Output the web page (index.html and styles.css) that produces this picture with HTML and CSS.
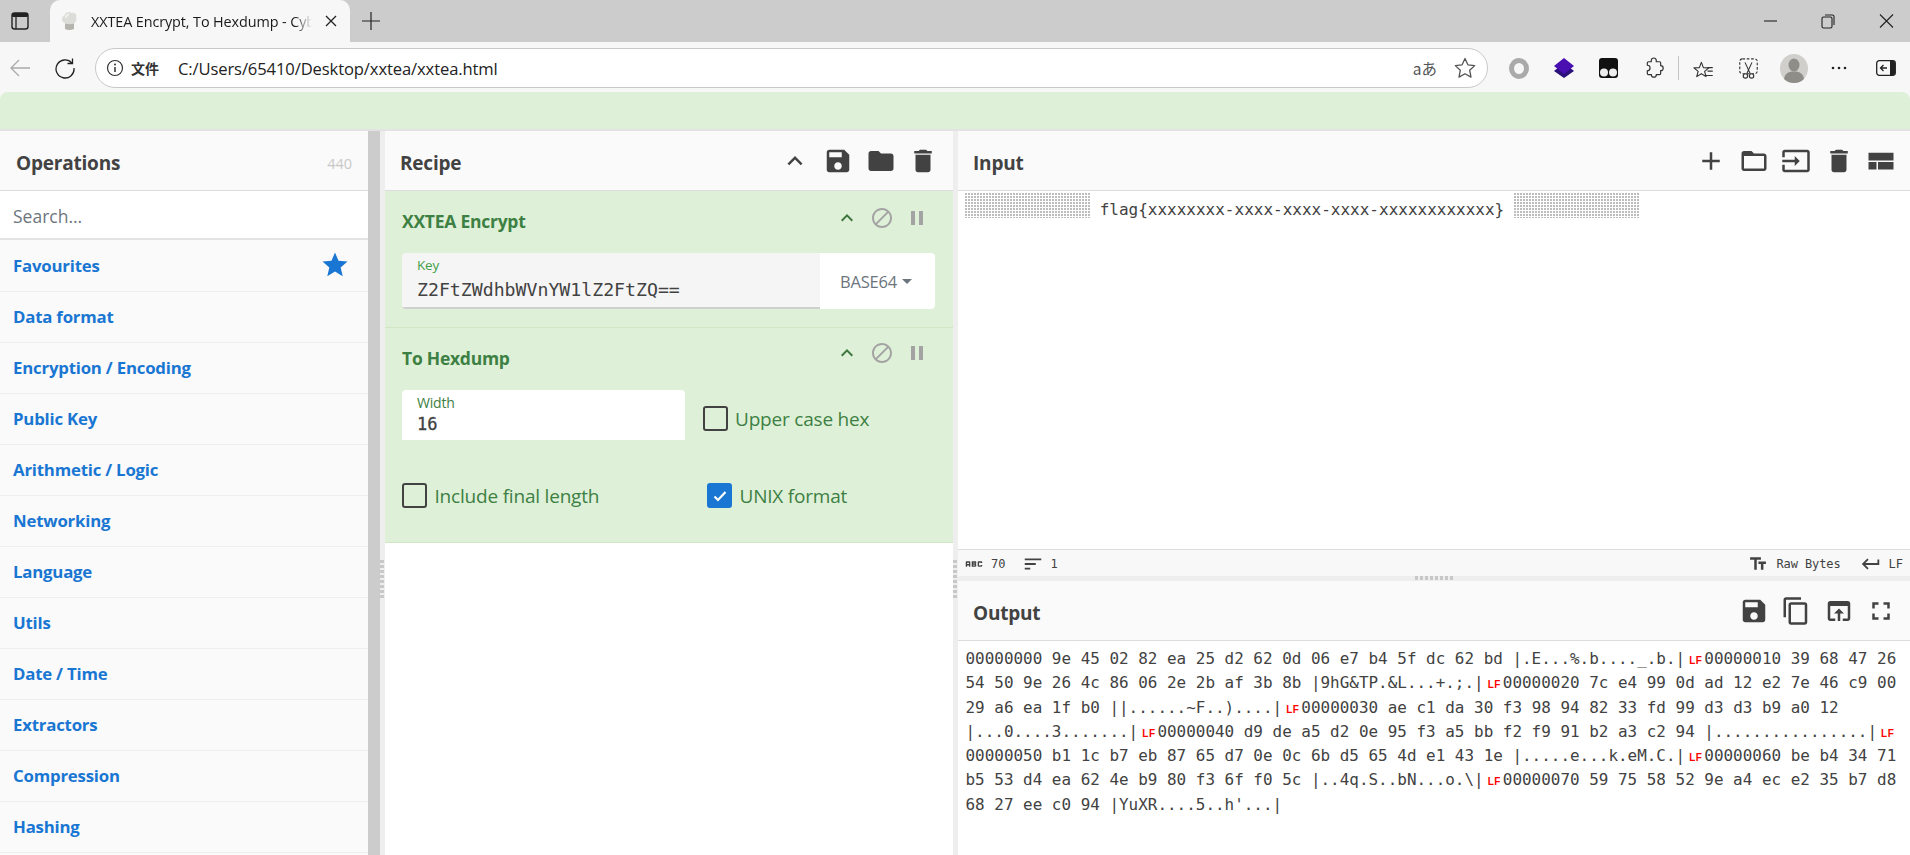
FILE: index.html
```html
<!DOCTYPE html>
<html lang="en">
<head>
<meta charset="utf-8">
<title>XXTEA Encrypt, To Hexdump - CyberChef</title>
<link rel="stylesheet" href="styles.css">
</head>
<body>
<svg class="defs" aria-hidden="true">
  <symbol id="i-save" viewBox="0 0 24 24"><path d="M17 3H5c-1.11 0-2 .9-2 2v14c0 1.1.89 2 2 2h14c1.1 0 2-.9 2-2V7l-4-4zm-5 16c-1.66 0-3-1.34-3-3s1.34-3 3-3 3 1.34 3 3-1.34 3-3 3zm3-10H5V5h10v4z"/></symbol>
  <symbol id="i-folder" viewBox="0 0 24 24"><path d="M10 4H4c-1.1 0-1.99.9-1.99 2L2 18c0 1.1.9 2 2 2h16c1.1 0 2-.9 2-2V8c0-1.1-.9-2-2-2h-8l-2-2z"/></symbol>
  <symbol id="i-folder-open" viewBox="0 0 24 24"><path d="M20 6h-8l-2-2H4c-1.1 0-1.99.9-1.99 2L2 18c0 1.1.9 2 2 2h16c1.1 0 2-.9 2-2V8c0-1.1-.9-2-2-2zm0 12H4V8h16v10z"/></symbol>
  <symbol id="i-delete" viewBox="0 0 24 24"><path d="M6 19c0 1.1.9 2 2 2h8c1.1 0 2-.9 2-2V7H6v12zM19 4h-3.5l-1-1h-5l-1 1H5v2h14V4z"/></symbol>
  <symbol id="i-less" viewBox="0 0 24 24"><path d="M12 8l-6 6 1.41 1.41L12 10.83l4.59 4.58L18 14z"/></symbol>
  <symbol id="i-add" viewBox="0 0 24 24"><path d="M19 13h-6v6h-2v-6H5v-2h6V5h2v6h6v2z"/></symbol>
  <symbol id="i-input" viewBox="0 0 24 24"><path d="M21 3.01H3c-1.1 0-2 .9-2 2V9h2V4.99h18v14.03H3V15H1v4.01c0 1.1.9 1.98 2 1.98h18c1.1 0 2-.88 2-1.98v-14c0-1.11-.9-2-2-2zM11 16l4-4-4-4v3H1v2h10v3z"/></symbol>
  <symbol id="i-layout" viewBox="0 0 24 24"><path d="M2 5.3h20v6.2H2zM2 12.7h6.4v6.1H2zM9.6 12.7H22v6.1H9.6z"/></symbol>
  <symbol id="i-copy" viewBox="0 0 24 24"><path d="M16 1H4c-1.1 0-2 .9-2 2v14h2V3h12V1zm3 4H8c-1.1 0-2 .9-2 2v14c0 1.1.9 2 2 2h11c1.1 0 2-.9 2-2V7c0-1.1-.9-2-2-2zm0 16H8V7h11v14z"/></symbol>
  <symbol id="i-open" viewBox="0 0 24 24"><path d="M19 4H5c-1.11 0-2 .9-2 2v12c0 1.1.89 2 2 2h4v-2H5V8h14v10h-4v2h4c1.1 0 2-.9 2-2V6c0-1.1-.89-2-2-2zm-7 6l-4 4h3v6h2v-6h3l-4-4z"/></symbol>
  <symbol id="i-full" viewBox="0 0 24 24"><path d="M7 14H5v5h5v-2H7v-3zm-2-4h2V7h3V5H5v5zm12 7h-3v2h5v-5h-2v3zM14 5v2h3v3h2V5h-5z"/></symbol>
  <symbol id="i-block" viewBox="0 0 24 24"><path d="M12 2C6.48 2 2 6.48 2 12s4.48 10 10 10 10-4.48 10-10S17.52 2 12 2zM4 12c0-4.42 3.58-8 8-8 1.85 0 3.55.63 4.9 1.69L5.69 16.9C4.63 15.55 4 13.85 4 12zm8 8c-1.85 0-3.55-.63-4.9-1.69L18.31 7.1C19.37 8.45 20 10.15 20 12c0 4.42-3.58 8-8 8z"/></symbol>
  <symbol id="i-pause" viewBox="0 0 24 24"><path d="M6 19h4V5H6v14zm8-14v14h4V5h-4z"/></symbol>
  <symbol id="i-tt" viewBox="0 0 24 24"><path d="M2.5 4v3h5v12h3V7h5V4h-13zm19 5h-9v3h3v7h3v-7h3V9z"/></symbol>
  <symbol id="i-return" viewBox="0 0 24 24"><path d="M19 7v4H5.83l3.58-3.59L8 6l-6 6 6 6 1.41-1.41L5.83 13H21V7z"/></symbol>
  <symbol id="i-sort" viewBox="0 0 24 24"><path d="M3 18h6v-2H3v2zM3 6v2h18V6H3zm0 7h12v-2H3v2z"/></symbol>
  <symbol id="i-abc" viewBox="0 0 24 24"><path d="M21 11h-1.5v-.5h-2v3h2V13H21v1c0 .55-.45 1-1 1h-3c-.55 0-1-.45-1-1v-4c0-.55.45-1 1-1h3c.55 0 1 .45 1 1v1zM8 10v5H6.5v-1.5h-2V15H3v-5c0-.55.45-1 1-1h3c.55 0 1 .45 1 1zm-1.5.5h-2V12h2v-1.5zm7 1.5c.55 0 1 .45 1 1v1c0 .55-.45 1-1 1h-4V9h4c.55 0 1 .45 1 1v1c0 .55-.45 1-1 1zM11 10.5v.75h2v-.75h-2zm2 2.25h-2v.75h2v-.75z"/></symbol>
  <symbol id="i-star" viewBox="0 0 24 24"><path d="M12 17.27L18.18 21l-1.64-7.03L22 9.24l-7.19-.61L12 2 9.19 8.63 2 9.24l5.46 4.73L5.82 21z"/></symbol>
</svg>

<header class="tabstrip">
  <div class="strip-btn">
    <svg class="chrome-ico" width="20" height="20" viewBox="0 0 20 20"><rect x="2" y="2" width="16" height="16" rx="2.5" fill="none" stroke="#222" stroke-width="1.4"/><rect x="2" y="2" width="16" height="4" rx="1.5" fill="#222"/><path d="M6 6v12" stroke="#222" stroke-width="1.3"/></svg>
  </div>
  <div class="tab">
    <svg class="favicon" width="20" height="20" viewBox="0 0 20 20"><path d="M5 12C1.500 11 .5 6 4.500 4.500c.5-3 5-4.500 7-2.500 3-1 6 1.500 4.500 4.500 1.500 2-.5 5-2 5.500v5.500c-2 1-6.500 1-9 0z" fill="#dcdcd8"/><path d="M5 12.500c3 1 6.500 1 9 0v5.500c-2.500 1.200-6.500 1.200-9 0z" fill="#b4b3ad"/><path d="M9 3c-2 .5-3 2-3 4" fill="none" stroke="#f4f4f2" stroke-width="1.500"/></svg>
    <span class="tab-title">XXTEA Encrypt, To Hexdump - CyberChef</span>
    <svg class="tab-close" width="12" height="12" viewBox="0 0 12 12"><path d="M1 1l10 10M11 1L1 11" stroke="#222" stroke-width="1.3"/></svg>
  </div>
  <div class="newtab">
    <svg width="18" height="18" viewBox="0 0 18 18"><path d="M9 0v18M0 9h18" stroke="#222" stroke-width="1.2"/></svg>
  </div>
  <div class="win-ctrls">
    <svg width="16" height="16" viewBox="0 0 16 16"><path d="M2 8h13" stroke="#222" stroke-width="1.1"/></svg>
    <svg width="16" height="16" viewBox="0 0 16 16"><rect x="2" y="4" width="10" height="11" rx="1.500" fill="none" stroke="#222" stroke-width="1.1"/><path d="M5 2h7.500A1.500 1.500 0 0 1 14 3.500V12" fill="none" stroke="#222" stroke-width="1.1"/></svg>
    <svg width="16" height="16" viewBox="0 0 16 16"><path d="M2 1.500l13 13M15 1.500l-13 13" stroke="#222" stroke-width="1.1"/></svg>
  </div>
</header>

<nav class="toolbar">
  <div class="tool-left">
    <svg width="22" height="22" viewBox="0 0 22 22"><path d="M21 11H2M10 3l-8 8 8 8" fill="none" stroke="#aaa" stroke-width="1.300"/></svg>
  </div>
  <div class="tool-left">
    <svg width="22" height="22" viewBox="0 0 22 22"><path d="M17.800 6A9 9 0 1 0 20 11" fill="none" stroke="#222" stroke-width="1.300"/><path d="M18.500 1.500V6.500H13.500" fill="none" stroke="#222" stroke-width="1.300"/></svg>
  </div>
  <div class="omnibox">
    <svg class="info" width="18" height="18" viewBox="0 0 18 18"><circle cx="9" cy="9" r="7.500" fill="none" stroke="#333" stroke-width="1.200"/><path d="M9 8v5" stroke="#333" stroke-width="1.500"/><circle cx="9" cy="5.500" r="1" fill="#333"/></svg>
    <span class="scheme">文件</span>
    <span class="url">C:/Users/65410/Desktop/xxtea/xxtea.html</span>
    <span class="translate">aあ</span>
    <svg class="fav" width="24" height="24" viewBox="0 0 24 24"><path d="M12 2.500l2.900 6.300 6.800.8-5 4.700 1.300 6.800-6-3.400-6 3.400 1.300-6.800-5-4.700 6.800-.8z" fill="none" stroke="#555" stroke-width="1.300" stroke-linejoin="round"/></svg>
  </div>
  <div class="ext-row">
    <div class="ext"><svg width="20" height="21" viewBox="0 0 20 21"><ellipse cx="10" cy="10.500" rx="7.500" ry="8" fill="none" stroke="#aaa" stroke-width="5"/></svg></div>
    <div class="ext"><svg width="20" height="20" viewBox="0 0 20 20"><path d="M10 5l10 8-10 7-10-7z" fill="#2b0f7a"/><path d="M10 0l10 8-10 8L0 8z" fill="#4a0fb0"/></svg></div>
    <div class="ext"><svg width="19" height="20" viewBox="0 0 19 20"><rect width="19" height="20" rx="3" fill="#111"/><circle cx="5" cy="14.500" r="4" fill="#eee"/><circle cx="14" cy="14.500" r="4" fill="#eee"/></svg></div>
    <div class="ext"><svg width="20" height="22" viewBox="0 0 24 28"><path d="M8.500 4.500a3.200 3.200 0 0 1 6.400 0V6H19a1.500 1.500 0 0 1 1.500 1.500V11a3.200 3.200 0 0 1 0 6.400V21a1.500 1.500 0 0 1-1.500 1.500H15a3.200 3.200 0 0 1-6.400 0H5A1.500 1.500 0 0 1 3.500 21v-3.500a3.500 3.500 0 0 0 0-7V7.500A1.500 1.500 0 0 1 5 6h3.500z" fill="none" stroke="#333" stroke-width="1.500"/></svg></div>
    <div class="ext-sep"></div>
    <div class="ext"><svg width="22" height="21" viewBox="0 0 24 24"><path d="M9 2l2.300 6 6.200.3-4.800 4 1.600 6-5.300-3.400-5.300 3.400 1.600-6-4.800-4 6.200-.3z" fill="none" stroke="#333" stroke-width="1.300" stroke-linejoin="round" transform="translate(0 3)"/><path d="M16 11h6M16 15h6M12 20h10" stroke="#333" stroke-width="1.300"/></svg></div>
    <div class="ext"><svg width="21" height="21" viewBox="0 0 24 24"><rect x="2" y="1" width="20" height="17" rx="3" fill="none" stroke="#333" stroke-width="1.300" stroke-dasharray="3 2"/><path d="M8 5l6 13M16 5l-6 13" stroke="#333" stroke-width="1.200"/><circle cx="8.500" cy="20.500" r="2.500" fill="#f7f7f7" stroke="#333" stroke-width="1.300"/><circle cx="15.500" cy="20.500" r="2.500" fill="#f7f7f7" stroke="#333" stroke-width="1.300"/></svg></div>
    <div class="ext"><svg width="28" height="29" viewBox="0 0 28 29"><ellipse cx="14" cy="14.500" rx="14" ry="14.500" fill="#d0cfcb"/><ellipse cx="14" cy="11" rx="5.500" ry="6.500" fill="#8f8d88"/><path d="M4 25c1-6 5-7.500 10-7.500s9 1.500 10 7.500c-2.500 2.500-6 4-10 4s-7.500-1.500-10-4z" fill="#8f8d88"/></svg></div>
    <div class="ext"><svg width="18" height="4" viewBox="0 0 18 4"><circle cx="3" cy="2" r="1.300" fill="#222"/><circle cx="9" cy="2" r="1.300" fill="#222"/><circle cx="15" cy="2" r="1.300" fill="#222"/></svg></div>
    <div class="ext ext-last"><svg width="20" height="16" viewBox="0 0 20 16"><rect x=".7" y=".7" width="18.600" height="14.600" rx="2.500" fill="none" stroke="#222" stroke-width="1.300"/><path d="M14 1h3a2 2 0 0 1 2 2v10a2 2 0 0 1-2 2h-3z" fill="#222"/><path d="M11 8H5M7.500 5L4.500 8l3 3" fill="none" stroke="#222" stroke-width="1.300"/></svg></div>
  </div>
</nav>

<div class="banner"></div>

<main class="workspace">
  <section class="ops">
    <div class="title-row"><h2 class="title">Operations</h2><span class="count">440</span></div>
    <div class="search">Search...</div>
    <ul class="cats">
      <li class="cat cat-first">Favourites<svg class="cat-star"><use href="#i-star"/></svg></li>
      <li class="cat">Data format</li>
      <li class="cat">Encryption / Encoding</li>
      <li class="cat">Public Key</li>
      <li class="cat">Arithmetic / Logic</li>
      <li class="cat">Networking</li>
      <li class="cat">Language</li>
      <li class="cat">Utils</li>
      <li class="cat">Date / Time</li>
      <li class="cat">Extractors</li>
      <li class="cat">Compression</li>
      <li class="cat">Hashing</li>
    </ul>
  </section>
  <div class="scrollbar"></div>
  <div class="gutter-v"><span class="grip-v"></span></div>

  <section class="recipe">
    <div class="title-row title-recipe">
      <h2 class="title">Recipe</h2>
      <div class="icons">
        <svg class="ico"><use href="#i-less"/></svg>
        <svg class="ico"><use href="#i-save"/></svg>
        <svg class="ico"><use href="#i-folder"/></svg>
        <svg class="ico"><use href="#i-delete"/></svg>
      </div>
    </div>

    <article class="op">
      <div class="op-head">
        <h3 class="op-name">XXTEA Encrypt</h3>
        <div class="op-ctrls">
          <svg class="ctl ctl-green"><use href="#i-less"/></svg>
          <svg class="ctl"><use href="#i-block"/></svg>
          <svg class="ctl"><use href="#i-pause"/></svg>
        </div>
      </div>
      <div class="key-field">
        <div class="key-main">
          <span class="field-label">Key</span>
          <span class="field-value">Z2FtZWdhbWVnYW1lZ2FtZQ==</span>
        </div>
        <div class="key-type">BASE64<span class="caret"></span></div>
      </div>
    </article>

    <article class="op op-hex">
      <div class="op-head">
        <h3 class="op-name">To Hexdump</h3>
        <div class="op-ctrls">
          <svg class="ctl ctl-green"><use href="#i-less"/></svg>
          <svg class="ctl"><use href="#i-block"/></svg>
          <svg class="ctl"><use href="#i-pause"/></svg>
        </div>
      </div>
      <div class="hex-row1">
        <div class="width-field">
          <span class="field-label">Width</span>
          <span class="field-value field-num">16</span>
        </div>
        <label class="check check-upper"><span class="box"></span><span class="check-text">Upper case hex</span></label>
      </div>
      <div class="hex-row2">
        <label class="check"><span class="box"></span><span class="check-text">Include final length</span></label>
        <label class="check"><span class="box box-on"><svg width="16" height="16" viewBox="0 0 16 16"><path d="M2.500 8.500l3.500 3.500 7.500-8" fill="none" stroke="#fff" stroke-width="2.200"/></svg></span><span class="check-text">UNIX format</span></label>
      </div>
    </article>
  </section>

  <div class="gutter-v"><span class="grip-v"></span></div>

  <section class="io">
    <div class="title-row title-io">
      <h2 class="title">Input</h2>
      <div class="icons">
        <svg class="ico"><use href="#i-add"/></svg>
        <svg class="ico"><use href="#i-folder-open"/></svg>
        <svg class="ico"><use href="#i-input"/></svg>
        <svg class="ico"><use href="#i-delete"/></svg>
        <svg class="ico"><use href="#i-layout"/></svg>
      </div>
    </div>
    <div class="input-body"><span class="ctrl-run"></span> <span class="flag">flag{xxxxxxxx-xxxx-xxxx-xxxx-xxxxxxxxxxxx}</span> <span class="ctrl-run"></span></div>
    <div class="status">
      <svg class="st-ico st-abc"><use href="#i-abc"/></svg><span class="st-txt st-70">70</span>
      <svg class="st-ico st-sort"><use href="#i-sort"/></svg><span class="st-txt st-1">1</span>
      <svg class="st-ico st-tt"><use href="#i-tt"/></svg><span class="st-txt st-raw">Raw Bytes</span>
      <svg class="st-ico st-ret"><use href="#i-return"/></svg><span class="st-txt st-lf">LF</span>
    </div>
    <div class="gutter-h"><span class="grip-h"></span></div>
    <div class="title-row title-io">
      <h2 class="title">Output</h2>
      <div class="icons">
        <svg class="ico"><use href="#i-save"/></svg>
        <svg class="ico"><use href="#i-copy"/></svg>
        <svg class="ico"><use href="#i-open"/></svg>
        <svg class="ico"><use href="#i-full"/></svg>
      </div>
    </div>
    <div class="output-body">
      <div class="ln">00000000 9e 45 02 82 ea 25 d2 62 0d 06 e7 b4 5f dc 62 bd |.E...%.b...._.b.|<span class="lf">LF</span>00000010 39 68 47 26</div>
      <div class="ln">54 50 9e 26 4c 86 06 2e 2b af 3b 8b |9hG&amp;TP.&amp;L...+.;.|<span class="lf">LF</span>00000020 7c e4 99 0d ad 12 e2 7e 46 c9 00</div>
      <div class="ln">29 a6 ea 1f b0 ||......~F..)....|<span class="lf">LF</span>00000030 ae c1 da 30 f3 98 94 82 33 fd 99 d3 d3 b9 a0 12</div>
      <div class="ln">|...0....3.......|<span class="lf">LF</span>00000040 d9 de a5 d2 0e 95 f3 a5 bb f2 f9 91 b2 a3 c2 94 |................|<span class="lf">LF</span></div>
      <div class="ln">00000050 b1 1c b7 eb 87 65 d7 0e 0c 6b d5 65 4d e1 43 1e |.....e...k.eM.C.|<span class="lf">LF</span>00000060 be b4 34 71</div>
      <div class="ln">b5 53 d4 ea 62 4e b9 80 f3 6f f0 5c |..4q.S..bN...o.\|<span class="lf">LF</span>00000070 59 75 58 52 9e a4 ec e2 35 b7 d8</div>
      <div class="ln">68 27 ee c0 94 |YuXR....5..h'...|</div>
    </div>
  </section>
</main>
</body>
</html>
```

FILE: styles.css
```css
* { box-sizing: border-box; }
html, body { margin: 0; height: 855px; overflow: hidden; }
body {
  display: flex;
  flex-direction: column;
  width: 1910px;
  background: #f7f7f7;
  font-family: "Open Sans", "Noto Sans CJK SC", sans-serif;
  color: #424242;
}
.defs { width: 0; height: 0; display: block; flex: none; }

/* Browser chrome */
.tabstrip {
  display: flex;
  align-items: center;
  height: 42px;
  flex: none;
  background: #cccccc;
}
.strip-btn { width: 40px; display: flex; justify-content: center; }
.tab {
  display: flex;
  align-items: center;
  width: 300px;
  height: 42px;
  margin-left: 10px;
  padding-left: 10px;
  background: #f7f7f7;
  border-radius: 10px 10px 0 0;
}
.favicon { flex: none; }
.tab-title {
  width: 221px;
  margin-left: 11px;
  white-space: nowrap;
  overflow: hidden;
  font-size: 14.400px;
  letter-spacing: -.1px;
  color: #1a1a1a;
  -webkit-mask-image: linear-gradient(90deg, #000 92%, transparent);
  mask-image: linear-gradient(90deg, #000 92%, transparent);
}
.tab-close { margin-left: 13px; flex: none; }
.newtab { width: 42px; display: flex; justify-content: center; }
.win-ctrls {
  margin-left: auto;
  display: flex;
  gap: 42px;
  padding-right: 16px;
}

.toolbar {
  display: flex;
  align-items: center;
  height: 50px;
  padding-top: 2px;
  flex: none;
  background: #f7f7f7;
}
.tool-left { width: 40px; margin-right: 5px; display: flex; justify-content: center; }
.omnibox {
  display: flex;
  align-items: center;
  width: 1394px;
  height: 40px;
  margin-left: 5px;
  padding: 0 10px 0 10px;
  background: #fff;
  border: 1px solid #c9c9c9;
  border-radius: 20px;
  font-size: 15px;
}
.info { flex: none; }
.scheme {
  margin-left: 7px;
  font-size: 14px;
  font-weight: 700;
  color: #333;
  font-family: "Noto Sans CJK SC", sans-serif;
}
.url { margin-left: 19px; color: #222; letter-spacing: -.12px; font-size: 16.600px; }
.translate { margin-left: auto; font-size: 15.500px; color: #555; font-family: "Noto Sans CJK JP", sans-serif; }
.fav { margin-left: 16px; flex: none; }
.ext-row { display: flex; align-items: center; margin-left: 8px; }
.ext { width: 45px; display: flex; justify-content: center; align-items: center; }
.ext-sep { width: 5px; height: 24px; border-left: 1px solid #c4c4c4; margin-left: 2px; margin-right: -2px; }
.ext-last { width: 49px; }

.banner {
  height: 39px;
  flex: none;
  background: #dff0d8;
  border-bottom: 2px solid #e3e3e3;
  border-radius: 8px 8px 0 0;
}

/* Workspace */
.workspace {
  flex: 1;
  min-height: 0;
  display: grid;
  grid-template-columns: 368px 12px 5px 568px 5px 1fr;
  background: #fff;
}
.title-row {
  display: flex;
  align-items: center;
  justify-content: space-between;
  height: 60px;
  flex: none;
  background: #fafafa;
  border-bottom: 1px solid #dddddd;
  padding: 0 16px;
}
.title { margin: 5px 0 0; font-size: 19px; font-weight: 700; color: #424242; letter-spacing: -.2px; }
.count { margin-top: 5px; font-size: 14.500px; color: #c8c8c8; }
.ops { background: #fafafa; overflow: hidden; }
.search {
  height: 49px;
  padding: 3px 0 0 13px;
  display: flex;
  align-items: center;
  background: #fff;
  border-bottom: 2px solid #e3e3e3;
  font-size: 17.500px;
  color: #6c757d;
}
.cats { list-style: none; margin: 0; padding: 0; }
.cat {
  height: 51px;
  padding: 0 18px 1px 13px;
  display: flex;
  align-items: center;
  justify-content: space-between;
  border-bottom: 1px solid #eeeeee;
  font-size: 16.800px;
  font-weight: 700;
  letter-spacing: -.2px;
  color: #1976d2;
}
.cat-first { height: 52px; }
.cat-star { width: 30px; height: 30px; fill: #1976d2; }
.scrollbar { background: #cccccc; }
.gutter-v { background: #eeeeee; display: flex; align-items: center; }
.grip-v {
  display: block;
  width: 4px;
  height: 38px;
  margin-top: 172px;
  background: repeating-linear-gradient(#c8c8c8 0 3px, transparent 3px 5px);
}

/* Recipe */
.recipe { background: #fff; overflow: hidden; }
.title-recipe { padding: 0 15px 0 15px; }
.title-io { padding: 0 14px 0 15px; }
.icons { display: flex; gap: 12.500px; }
.ico { width: 30px; height: 30px; fill: #424242; display: block; }
.title-recipe .ico:first-child { margin-right: 1px; }
.op {
  background: #dff0d8;
  border-bottom: 1px solid #d0e6c4;
  padding: 0 18px 18px 17px;
}
.op-head {
  display: flex;
  align-items: flex-start;
  justify-content: space-between;
  height: 62px;
}
.op-name {
  margin: 19px 0 0;
  font-size: 17.500px;
  line-height: 22px;
  font-weight: 700;
  letter-spacing: -.25px;
  color: #3d8043;
}
.op-ctrls { display: flex; gap: 11px; margin-top: 15px; padding-right: 6.500px; }
.op-hex .op-ctrls { margin-top: 13px; }
.ctl { width: 24px; height: 24px; fill: #a3a3a3; display: block; }
.ctl-green { fill: #3c763d; }

.key-field {
  display: flex;
  height: 56px;
  border-radius: 4px;
  overflow: hidden;
}
.key-main {
  width: 418px;
  padding: 3px 0 0 15px;
  background: #f5f5f5;
  border-bottom: 2px solid #cfcfcf;
}
.field-label {
  display: block;
  font-size: 13.500px;
  line-height: 19px;
  color: #43a047;
  letter-spacing: -.2px;
}
.field-value {
  display: block;
  margin-top: 2px;
  font-family: "DejaVu Sans Mono", monospace;
  font-size: 18.200px;
  line-height: 25px;
  color: #424242;
}
.key-type {
  width: 115px;
  background: #fff;
  display: flex;
  align-items: center;
  padding-left: 20px;
  font-size: 16.500px;
  letter-spacing: -.2px;
  color: #6c757d;
}
.caret {
  width: 0;
  height: 0;
  margin-left: 5px;
  border: 5px solid transparent;
  border-top-color: #6c757d;
  border-bottom: 0;
}

.op-hex { padding-bottom: 34px; }
.hex-row1 { display: flex; align-items: flex-start; height: 93px; }
.width-field {
  width: 283px;
  height: 50px;
  padding: 3px 0 0 15px;
  background: #fff;
  border-radius: 4px 4px 0 0;
}
.field-num { margin-top: 0; font-size: 17px; line-height: 24px; -webkit-text-stroke: .3px #424242; }
.width-field .field-label { color: #3d8043; font-size: 14px; }
.check {
  display: flex;
  align-items: center;
  gap: 7.500px;
  font-size: 19px;
  line-height: 25px;
  letter-spacing: -.2px;
  color: #3d8043;
}
.check-text { padding-top: 2px; line-height: 23px; }
.check-upper { margin: 16px 0 0 17.500px; }
.box {
  width: 25px;
  height: 25px;
  flex: none;
  border: 2px solid #424242;
  border-radius: 3px;
  display: flex;
  align-items: center;
  justify-content: center;
}
.box-on { background: #1976d2; border-color: #1976d2; }
.hex-row2 { display: grid; grid-template-columns: 305px 1fr; }

/* Input and output */
.io { display: flex; flex-direction: column; min-width: 0; overflow: hidden; background: #fff; }
.input-body {
  height: 358px;
  flex: none;
  padding: 2px 0 0 7px;
  font-family: "DejaVu Sans Mono", monospace;
  font-size: 16px;
  line-height: 25px;
  white-space: pre;
  color: #424242;
}
.flag { display: inline-block; vertical-align: top; padding-top: 4px; }
.ctrl-run {
  display: inline-block;
  width: 125px;
  height: 25px;
  vertical-align: top;
  background-image: radial-gradient(circle at 1px 1px, #aaaaaa .65px, transparent .9px);
  background-size: 3px 3px;
}
.status {
  display: flex;
  align-items: center;
  height: 27px;
  flex: none;
  background: #f8f8f8;
  border-top: 1px solid #dddddd;
  padding: 1px 0 0 5px;
}
.st-ico { width: 22px; height: 22px; fill: #424242; display: block; flex: none; }
.st-txt { font-family: "DejaVu Sans Mono", monospace; font-size: 12px; color: #424242; }
.st-70 { margin-left: 6px; }
.st-sort { margin-left: 17px; }
.st-1 { margin-left: 6px; }
.st-tt { margin-left: auto; width: 20px; height: 20px; }
.st-raw { margin-left: 8px; letter-spacing: -.1px; }
.st-ret { margin-left: 19px; }
.st-lf { margin-left: 7px; margin-right: 7px; }
.gutter-h { height: 5px; flex: none; background: #eeeeee; display: flex; justify-content: center; }
.grip-h {
  display: block;
  width: 38px;
  height: 4px;
  background: repeating-linear-gradient(90deg, #c8c8c8 0 3px, transparent 3px 5px);
}
.output-body {
  flex: 1;
  padding: 6px 0 0 7.500px;
  font-family: "DejaVu Sans Mono", monospace;
  font-size: 15.950px;
  line-height: 24.300px;
  color: #424242;
}
.ln { white-space: pre; height: 24.300px; }
.lf {
  display: inline-block;
  width: 19.200px;
  padding-left: 4px;
  font-family: "Liberation Sans", sans-serif;
  font-size: 10px;
  font-weight: 700;
  letter-spacing: .6px;
  color: #f00;
}
```
